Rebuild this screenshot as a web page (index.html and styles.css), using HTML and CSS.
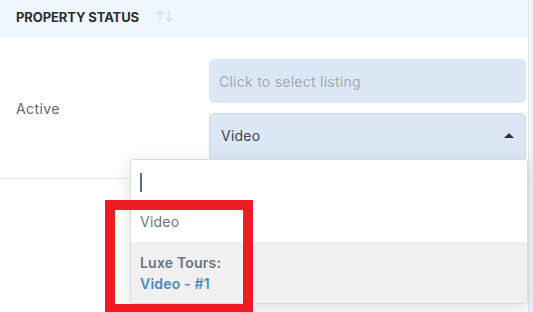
FILE: index.html
```html
<!DOCTYPE html>
<html>
<head>
<meta charset="utf-8">
<link rel="stylesheet" href="styles.css">
</head>
<body>
<div class="page">
  <div class="table">
    <div class="thead">
      <span class="th-label">PROPERTY STATUS</span>
      <svg class="sort" width="18" height="12" viewBox="0 0 18 12" fill="none" stroke="#d3dbe5" stroke-width="1.2" stroke-linecap="round" stroke-linejoin="round">
        <path d="M4 11.5V1M0.8 4.2L4 1L7.2 4.2"/>
        <path d="M13 0.5V11M9.8 7.8L13 11L16.2 7.8"/>
      </svg>
    </div>
    <div class="row">
      <div class="cell-status">Active</div>
      <div class="cell-fields">
        <div class="field placeholder">Click to select listing</div>
        <div class="field select">
          <span>Video</span>
          <span class="caret"></span>
        </div>
      </div>
    </div>
  </div>
  <div class="scroll"></div>

  <div class="dropdown">
    <div class="search"><span class="cursor"></span></div>
    <div class="group-label">Video</div>
    <div class="option">
      <div class="opt-title">Luxe Tours:</div>
      <div class="opt-link">Video - #1</div>
    </div>
  </div>
  <div class="highlight"></div>
</div>
</body>
</html>
```

FILE: styles.css
```css
html, body {
  margin: 0;
  padding: 0;
  background: #ffffff;
  font-family: "Inter", "Open Sans", sans-serif;
}

.page {
  position: relative;
  display: flex;
  width: 533px;
  height: 312px;
  overflow: hidden;
}

.table {
  width: 528px;
  flex: none;
}

.scroll {
  flex: 1;
  background: #eff4fa;
  border-left: 1px solid #dfe5ec;
}

.thead {
  height: 37px;
  background: #f0f6fe;
  display: flex;
  align-items: center;
  padding-left: 16px;
  gap: 17px;
}

.th-label {
  font-size: 13px;
  font-weight: 700;
  color: #2b2e33;
  letter-spacing: -0.1px;
  margin-top: -4px;
}

.sort {
  margin-top: -5px;
}

.row {
  display: flex;
  height: 141px;
  border-bottom: 1px solid #e2e5ea;
}

.cell-status {
  width: 193px;
  padding-left: 16px;
  display: flex;
  align-items: center;
  font-size: 14px;
  letter-spacing: 0.4px;
  color: #5d6573;
  padding-top: 1px;
}

.cell-fields {
  width: 317px;
  padding-top: 22px;
  display: flex;
  flex-direction: column;
  gap: 10px;
}

.field {
  box-sizing: border-box;
  height: 44px;
  background: #dbe7f5;
  border-radius: 5px;
  display: flex;
  align-items: center;
  font-size: 14px;
  letter-spacing: 0.25px;
}

.placeholder {
  padding-left: 10px;
  color: #a3abb7;
}

.select {
  height: 48px;
  border: 1px solid #cfdae7;
  padding-left: 11px;
  padding-right: 10px;
  padding-bottom: 4px;
  justify-content: space-between;
  color: #3b4656;
}

.caret {
  width: 0;
  height: 0;
  border-left: 5px solid transparent;
  border-right: 5px solid transparent;
  border-bottom: 5px solid #2f3338;
  margin-right: 1px;
}

.dropdown {
  position: absolute;
  left: 130px;
  top: 159px;
  width: 398px;
  height: 145px;
  box-sizing: border-box;
  background: #ffffff;
  border: 1px solid #d9dde2;
  border-radius: 3px;
  box-shadow: 0 4px 18px rgba(0, 0, 0, 0.13);
  overflow: hidden;
}

.search {
  height: 44px;
  padding-left: 9px;
  display: flex;
  align-items: center;
}

.cursor {
  display: block;
  width: 2px;
  height: 19px;
  background: #5a6a82;
  margin-top: 1px;
}

.group-label {
  height: 38px;
  padding-left: 9px;
  font-size: 14px;
  letter-spacing: 0.25px;
  color: #6d7584;
  line-height: 35px;
}

.option {
  background: #f0f0f0;
  height: 64px;
  padding-left: 9px;
  padding-top: 10px;
  box-sizing: border-box;
  font-size: 14px;
  font-weight: 600;
  letter-spacing: 0.2px;
  line-height: 21px;
}

.opt-title {
  color: #6a7485;
}

.opt-link {
  color: #4a8bc6;
}

.highlight {
  position: absolute;
  left: 105px;
  top: 200px;
  width: 148px;
  height: 114px;
  box-sizing: border-box;
  border: 10px solid #ed1c24;
}
```
